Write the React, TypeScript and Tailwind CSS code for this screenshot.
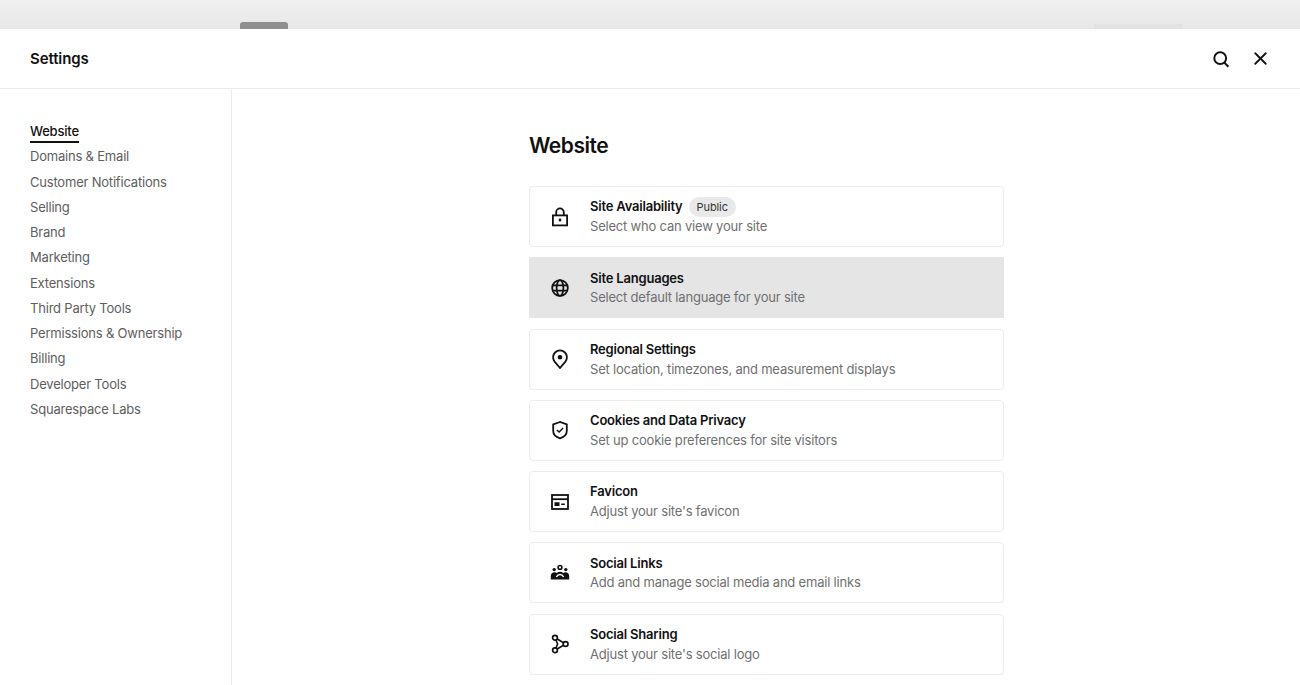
import { X } from "lucide-react";

const navItems = [
  "Website",
  "Domains & Email",
  "Customer Notifications",
  "Selling",
  "Brand",
  "Marketing",
  "Extensions",
  "Third Party Tools",
  "Permissions & Ownership",
  "Billing",
  "Developer Tools",
  "Squarespace Labs",
];

function Icon({ children }: { children: React.ReactNode }) {
  return (
    <svg width="20" height="20" viewBox="0 0 20 20" fill="none" stroke="#111" strokeWidth="1.8" className="shrink-0">
      {children}
    </svg>
  );
}

const rows = [
  {
    title: "Site Availability",
    desc: "Select who can view your site",
    badge: "Public",
    icon: (
      <Icon>
        <rect x="2.9" y="8.4" width="14.2" height="10" />
        <path d="M6.2 8.4V5.2a3.8 3.8 0 0 1 7.6 0v3.2" />
        <path d="M10 11.6v2.8" strokeWidth="2.4" />
      </Icon>
    ),
  },
  {
    title: "Site Languages",
    desc: "Select default language for your site",
    active: true,
    icon: (
      <Icon>
        <circle cx="10" cy="10" r="7.8" />
        <ellipse cx="10" cy="10" rx="3.4" ry="7.8" />
        <path d="M2.4 7.4h15.2M2.4 12.6h15.2" />
      </Icon>
    ),
  },
  {
    title: "Regional Settings",
    desc: "Set location, timezones, and measurement displays",
    icon: (
      <Icon>
        <path d="M10 19 4.6 12.6a6.9 6.9 0 1 1 10.8 0L10 19Z" />
        <circle cx="10" cy="8.2" r="1.4" fill="#111" />
      </Icon>
    ),
  },
  {
    title: "Cookies and Data Privacy",
    desc: "Set up cookie preferences for site visitors",
    icon: (
      <Icon>
        <path d="M10 2 3.2 4.4v6.4c0 3.8 2.8 6.4 6.8 7.6 4-1.2 6.8-3.8 6.8-7.6V4.4L10 2Z" />
        <path d="m6.9 9.9 2.2 2.2 4-4" strokeWidth="1.4" />
      </Icon>
    ),
  },
  {
    title: "Favicon",
    desc: "Adjust your site's favicon",
    icon: (
      <Icon>
        <rect x="2" y="3" width="16" height="14" />
        <path d="M2 7.2h16" />
        <path d="M5.2 11h3.6v2.4H5.2zM11.2 12.2h3.6" fill="#111" strokeWidth="1.4" />
      </Icon>
    ),
  },
  {
    title: "Social Links",
    desc: "Add and manage social media and email links",
    icon: (
      <Icon>
        <circle cx="10" cy="4.4" r="1.9" strokeWidth="1.6" />
        <circle cx="4.2" cy="6.6" r="1.7" fill="#111" stroke="none" />
        <circle cx="15.8" cy="6.6" r="1.7" fill="#111" stroke="none" />
        <path
          d="M.8 16.6v-3.4c0-2.4 1.6-4 3.8-4 1 0 1.7.3 2.2.7.9-.7 2-1.1 3.2-1.1s2.3.4 3.2 1.1c.5-.4 1.2-.7 2.2-.7 2.2 0 3.8 1.6 3.8 4v3.4H.8Z"
          fill="#111"
          stroke="none"
        />
        <path d="M6.4 14c.8-1.6 2-2.4 3.6-2.4s2.8.8 3.6 2.4" stroke="#fff" strokeWidth="1.5" />
      </Icon>
    ),
  },
  {
    title: "Social Sharing",
    desc: "Adjust your site's social logo",
    icon: (
      <Icon>
        <circle cx="5" cy="3.8" r="2.4" strokeWidth="1.7" />
        <circle cx="5" cy="16.2" r="2.4" strokeWidth="1.7" />
        <circle cx="15.6" cy="10" r="2.4" strokeWidth="1.7" />
        <path d="M5.9 6 7.6 10l-1.7 4M7.2 5 13.5 8.8M7.2 15l6.3-3.8" strokeWidth="1.6" />
      </Icon>
    ),
  },
];

export default function App() {
  return (
    <div className="h-[685px] overflow-hidden bg-white font-['Inter',sans-serif] text-[#111]">
      <div className="flex h-[29px] items-end justify-between bg-gradient-to-b from-[#f0f0f0] to-[#e7e7e7] pl-[240px] pr-[118px]">
        <div className="h-[7px] w-[48px] rounded-t-[3px] bg-[#8f8f8f]" />
        <div className="h-[5px] w-[88px] bg-[#e2e2e2]" />
      </div>

      <header className="flex h-[60px] items-center justify-between border-b border-[#ebebeb] pl-[30px] pr-[29px]">
        <h1 className="pt-px text-[15px] font-semibold tracking-[-0.1px]">Settings</h1>
        <div className="flex items-center gap-[19px]">
          <svg width="20" height="20" viewBox="0 0 20 20" fill="none" stroke="#111" strokeWidth="2">
            <circle cx="9.2" cy="9.2" r="5.9" />
            <path d="m13.4 13.6 4 4.2" />
          </svg>
          <X size={21} strokeWidth={2.1} />
        </div>
      </header>

      <div className="flex">
        <nav className="h-[600px] w-[232px] shrink-0 border-r border-[#ebebeb] pl-[30px] pt-[29.5px]">
          <ul className="flex flex-col">
            {navItems.map((item, i) => (
              <li key={item} className="flex h-[25.25px] items-center">
                <span
                  className={
                    i === 0
                      ? "border-b-2 border-[#111] pt-[2px] text-[13px] font-medium leading-[20px] tracking-[-0.2px] text-[#111]"
                      : "text-[13px] leading-[20px] tracking-[-0.2px] text-[#5e5e5e]"
                  }
                >
                  {item}
                </span>
              </li>
            ))}
          </ul>
        </nav>

        <main className="pl-[297px] pt-[43px]">
          <h2 className="text-[21px] font-semibold leading-[28px] tracking-[-0.5px]">Website</h2>
          <div className="mt-[26px] flex w-[475px] flex-col gap-[10.25px]">
            {rows.map((r) => (
              <div
                key={r.title}
                className={
                  r.active
                    ? "flex h-[61px] items-center gap-[20px] bg-[#e5e5e5] pl-[21px]"
                    : "flex h-[61px] items-center gap-[20px] rounded-[4px] border border-[#ececec] pl-[20px]"
                }
              >
                {r.icon}
                <div>
                  <div className="flex h-[20px] items-center gap-[6px]">
                    <span className="text-[13px] font-semibold tracking-[-0.2px]">{r.title}</span>
                    {r.badge && (
                      <span className="rounded-full bg-[#e9e9e9] px-[8px] py-[3px] text-[11px] leading-[14px] tracking-[-0.1px] text-[#333]">
                        {r.badge}
                      </span>
                    )}
                  </div>
                  <p className="text-[13px] leading-[19px] tracking-[-0.2px] text-[#707070]">{r.desc}</p>
                </div>
              </div>
            ))}
            <div className="h-[61px] rounded-[4px] border border-[#ececec]" />
          </div>
        </main>
      </div>
    </div>
  );
}
